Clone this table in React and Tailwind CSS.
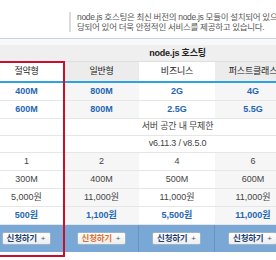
const FONT = { fontFamily: '"Liberation Sans", "Noto Sans CJK KR", sans-serif' };

const cols = [
  { name: "절약형", bg: "bg-white", hbg: "bg-white" },
  { name: "일반형", bg: "bg-[#f6f6f6]", hbg: "bg-[#ececec]" },
  { name: "비즈니스", bg: "bg-white", hbg: "bg-white" },
  { name: "퍼스트클래스", bg: "bg-[#f6f6f6]", hbg: "bg-[#ececec]" },
];

const rows = [
  { type: "cells", blue: true, vals: ["400M", "800M", "2G", "4G"] },
  { type: "cells", blue: true, vals: ["600M", "800M", "2.5G", "5.5G"] },
  { type: "span", text: "서버 공간 내 무제한" },
  { type: "span", text: "v6.11.3 / v8.5.0" },
  { type: "cells", vals: ["1", "2", "4", "6"] },
  { type: "cells", vals: ["300M", "400M", "500M", "600M"] },
  { type: "cells", vals: ["5,000원", "11,000원", "11,000원", "11,000원"] },
  { type: "cells", blue: true, vals: ["500원", "1,100원", "5,500원", "11,000원"] },
];

function Btn({ orange }) {
  return (
    <div className="w-[49px] h-[13px] rounded-[2px] border border-[#9fb3c8] bg-gradient-to-b from-white to-[#ededed] flex items-center justify-center gap-[4px]">
      <span className={"text-[8.5px] font-bold leading-none tracking-[-0.3px] " + (orange ? "text-[#e2702a]" : "text-[#1c3f72]")}>신청하기</span>
      <span className="text-[8px] leading-none text-[#555]">+</span>
    </div>
  );
}

export default function App() {
  return (
    <div className="w-[276px] h-[260px] overflow-hidden bg-white relative" style={FONT}>
      <div className="h-[38px] pt-[12px] pl-[69px]">
        <div className="border-l-2 border-[#dcdcdc] pl-[6px] text-[8.5px] leading-[10px] tracking-[-0.3px] text-[#555] whitespace-nowrap">
          <p>node.js 호스팅은 최신 버전의 node.js 모듈이 설치되어 있으며</p>
          <p>당되어 있어 더욱 안정적인 서비스를 제공하고 있습니다.</p>
        </div>
      </div>
      <div className="h-px bg-[#c7d5e2]" />
      <div className="h-[6px] bg-[#f8f8f8]" />
      <div className="ml-[-11px] w-[378px] grid grid-cols-[75px_75px_76px_76px_76px] text-[9px] text-[#333]">
        <div className="h-[17px] bg-[#efefef] border-b border-[#dedede]" />
        <div className="col-span-3 h-[17px] pt-[2px] bg-[#efefef] border-b border-[#dedede] flex items-center justify-center font-bold text-[9px] tracking-[-0.2px] text-[#222]">node.js 호스팅</div>
        <div className="h-[17px] bg-[#efefef] border-b border-[#dedede]" />
        {cols.map((c) => (
          <div key={c.name} className={"h-[21px] border-b-2 border-[#2ea3db] flex items-center justify-center text-[9px] tracking-[-0.2px] text-[#222] " + c.hbg}>{c.name}</div>
        ))}
        <div className="h-[21px] border-b-2 border-[#2ea3db] bg-white" />
        {rows.map((r, i) =>
          r.type === "span" ? (
            [
              <div key={i + "a"} className="h-[17px] bg-white border-b border-[#e6e6e6]" />,
              <div key={i + "b"} className="col-span-3 h-[17px] bg-white border-b border-[#e6e6e6] flex items-center justify-center text-[#444] tracking-[-0.2px]">{r.text}</div>,
              <div key={i + "c"} className="h-[17px] bg-white border-b border-[#e6e6e6]" />,
            ]
          ) : (
            [
              ...r.vals.map((v, j) => (
                <div key={i + "-" + j} className={"h-[18px] border-b border-[#e6e6e6] flex items-center justify-center " + cols[j].bg + (r.blue ? " font-bold text-[#1f66b5]" : " text-[#444]")}>{v}</div>
              )),
              <div key={i + "e"} className="h-[18px] border-b border-[#e6e6e6] bg-white" />,
            ]
          )
        )}
        {[0, 1, 2, 3, 4].map((j) => (
          <div key={"b" + j} className="h-[27px] bg-[#79a7d6] border-r border-[#6994c2] flex items-center justify-center">
            {j < 4 && <Btn orange={j === 1} />}
          </div>
        ))}
      </div>
      <div className="absolute left-[-2px] top-[61px] w-[67px] h-[196px] border-2 border-[#c8102e] pointer-events-none" />
    </div>
  );
}
